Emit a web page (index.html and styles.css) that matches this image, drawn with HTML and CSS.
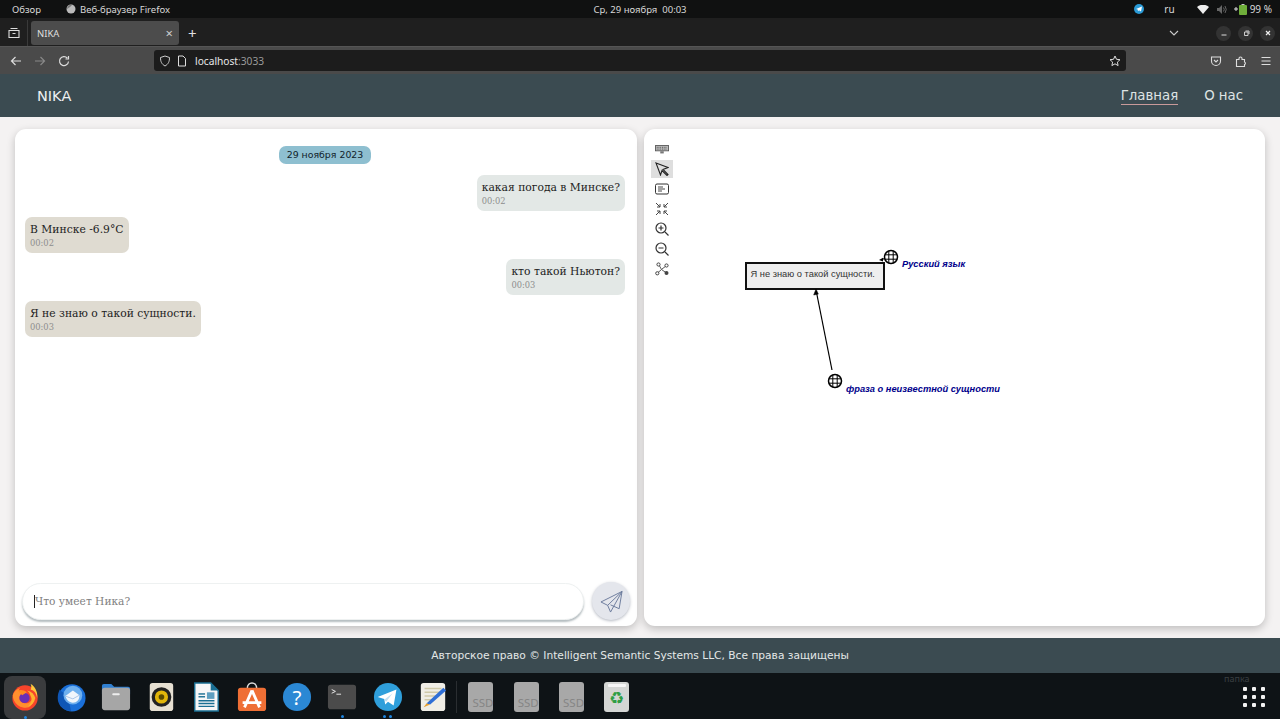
FILE: index.html
```html
<!DOCTYPE html>
<html lang="ru">
<head>
<meta charset="utf-8">
<title>NIKA</title>
<link rel="stylesheet" href="styles.css">
</head>
<body>
<div class="screen">
  <div class="topbar">
    <div class="topbar-left">
      <span>Обзор</span>
      <span class="app-name"><svg class="ff-mini" viewBox="0 0 10 10"><circle cx="5" cy="5" r="4.500" fill="#bbb"/><path d="M1 5a4 4 0 0 1 5-4L4 3z" fill="#777"/></svg>Веб-браузер Firefox</span>
    </div>
    <div class="clock">Ср, 29 ноября&nbsp; 00:03</div>
    <div class="topbar-right">
      <svg class="tray-tg" viewBox="0 0 10 10"><circle cx="5" cy="5" r="5" fill="#2a9ad6"/><path d="M2 5l6-2.400-1 5-2-1.400-1 1-.3-1.800z" fill="#fff"/></svg>
      <span class="lang">ru</span>
      <svg class="tray-wifi" viewBox="0 0 12 9"><path d="M0 2a9 9 0 0 1 12 0L6 9z" fill="#eee"/></svg>
      <svg class="tray-vol" viewBox="0 0 10 9"><path d="M0 3h2l3-3v9L2 6H0z" fill="#666"/><path d="M6.500 2.500q1.500 2 0 4M8 1q2.500 3.500 0 7" fill="none" stroke="#666"/></svg>
      <span class="battery"><svg class="tray-plus" viewBox="0 0 4 4"><path d="M0 2h4M2 0v4" stroke="#ddd"/></svg><svg class="tray-bat" viewBox="0 0 8 11"><rect x="2.500" width="3" height="2" fill="#ccc"/><rect y="1" width="8" height="10" rx="1" fill="#6fae3a"/></svg>99 %</span>
    </div>
  </div>

  <div class="tabbar">
    <div class="tab-list-btn"><svg viewBox="0 0 12 12" class="ic12"><path d="M2.500 1.500h7M1 3.500h10v7H1z M4.500 6.500h3" fill="none" stroke="#ddd" stroke-width="1.100"/></svg></div>
    <div class="tab"><span>NIKA</span><span class="tab-close">×</span></div>
    <span class="new-tab">+</span>
    <span class="spacer"></span>
    <svg class="chev" viewBox="0 0 10 6"><path d="M1 1l4 4 4-4" fill="none" stroke="#ccc" stroke-width="1.100"/></svg>
    <div class="win-btns">
      <span class="win-btn"><svg viewBox="0 0 8 8" class="ic8"><path d="M1.500 6h5" stroke="#ddd"/></svg></span>
      <span class="win-btn"><svg viewBox="0 0 8 8" class="ic8"><path d="M2.500 3h3.500v3.500H2.500zM3.500 2h3.500v3" fill="none" stroke="#ddd" stroke-width=".9"/></svg></span>
      <span class="win-btn"><svg viewBox="0 0 8 8" class="ic8"><path d="M2 2l4 4M6 2L2 6" stroke="#eee" stroke-width="1.200"/></svg></span>
    </div>
  </div>

  <div class="toolbar">
    <div class="nav-btns">
      <svg viewBox="0 0 12 12" class="ic12"><path d="M11 6H1.500M5.500 2l-4 4 4 4" fill="none" stroke="#ddd" stroke-width="1.200"/></svg>
      <svg viewBox="0 0 12 12" class="ic12"><path d="M1 6h9.500M6.500 2l4 4-4 4" fill="none" stroke="#888" stroke-width="1.200"/></svg>
      <svg viewBox="0 0 12 12" class="ic12"><path d="M10.500 6.500a4.500 4.500 0 1 1-1.200-3.500M10.500 1v3h-3" fill="none" stroke="#ddd" stroke-width="1.200"/></svg>
    </div>
    <div class="urlbar">
      <svg viewBox="0 0 12 12" class="ic12"><path d="M6 1l4.500 1.500c0 4-1 6.500-4.500 8.500-3.500-2-4.500-4.500-4.500-8.500z" fill="none" stroke="#ccc"/></svg>
      <svg viewBox="0 0 10 12" class="ic-page"><path d="M1.500 1h4.500l2.500 2.500V11h-7z" fill="none" stroke="#ddd"/></svg>
      <span class="url">localhost<span class="url-port">:3033</span></span>
      <span class="spacer"></span>
      <svg viewBox="0 0 12 12" class="ic12"><path d="M6 1l1.500 3.300 3.500.4-2.600 2.400.7 3.500L6 8.800l-3.100 1.800.7-3.500L1 4.700l3.500-.4z" fill="none" stroke="#ddd"/></svg>
    </div>
    <div class="tool-btns">
      <svg viewBox="0 0 12 12" class="ic12"><path d="M1.500 2h9v4a4.500 4.500 0 0 1-9 0zM4 5l2 2 2-2" fill="none" stroke="#ddd" stroke-width="1.100"/></svg>
      <svg viewBox="0 0 12 12" class="ic12"><path d="M1.500 4.500h2.500v-1a1.500 1.500 0 0 1 3 0v1h2.500V7a1.300 1.300 0 0 1 0 2.500v2h-8z" fill="none" stroke="#ddd" stroke-width="1.100"/></svg>
      <svg viewBox="0 0 12 12" class="ic12"><path d="M1.500 2.500h9M1.500 6h9M1.500 9.500h9" stroke="#ddd" stroke-width="1.100"/></svg>
    </div>
  </div>

  <header class="site-header">
    <span class="brand">NIKA</span>
    <nav class="site-nav">
      <a class="nav-link active">Главная</a>
      <a class="nav-link">О нас</a>
    </nav>
  </header>

  <main class="content">
    <section class="card chat">
      <div class="messages">
        <div class="date-pill">29 ноября 2023</div>
        <div class="msg msg-user">какая погода в Минске?<time>00:02</time></div>
        <div class="msg msg-bot">В Минске -6.9°C<time>00:02</time></div>
        <div class="msg msg-user">кто такой Ньютон?<time>00:03</time></div>
        <div class="msg msg-bot">Я не знаю о такой сущности.<time>00:03</time></div>
      </div>
      <div class="composer">
        <div class="input"><span class="caret"></span>Что умеет Ника?</div>
        <button class="send" type="button">
          <svg viewBox="0 0 24 24" class="send-ic"><path d="M23 1.500L1 12.500l7 3.500 3 7zM23 1.500L8 16M23 1.500l-3 18-9-4" fill="none" stroke="#6b7a9c" stroke-width="1" stroke-linejoin="round"/></svg>
        </button>
      </div>
    </section>

    <section class="card graph">
      <div class="graph-tools">
        <span class="gt"><svg viewBox="0 0 16 10" class="gt-kb"><rect x=".5" y=".5" width="15" height="6" fill="#bbb" stroke="#555"/><path d="M2 2.500h12M2 4.500h12" stroke="#444" stroke-dasharray="1 1"/><path d="M6 7h4v2.500H6z" fill="#777"/></svg></span>
        <span class="gt gt-active"><svg viewBox="0 0 14 14" class="gt-ic"><path d="M1 1l12 4.500-5 2L13 12.500 12 13.500 7 8.500l-1.500 4.500z" fill="none" stroke="#222" stroke-width="1.100"/></svg></span>
        <span class="gt"><svg viewBox="0 0 14 14" class="gt-ic"><rect x=".5" y="2" width="13" height="10" rx="1.500" fill="none" stroke="#333"/><path d="M3 5h5M3 7h7M3 9h4" stroke="#333" stroke-width=".9"/></svg></span>
        <span class="gt"><svg viewBox="0 0 14 14" class="gt-ic"><path d="M1 1l4 4M5 2v3H2M13 1L9 5M9 2v3h3M1 13l4-4M5 12V9H2M13 13L9 9M9 12V9h3" fill="none" stroke="#444"/></svg></span>
        <span class="gt"><svg viewBox="0 0 14 14" class="gt-ic"><circle cx="6" cy="6" r="5" fill="none" stroke="#333" stroke-width="1.200"/><path d="M10 10l3.500 3.500M3.500 6h5M6 3.500v5" stroke="#333" stroke-width="1.200"/></svg></span>
        <span class="gt"><svg viewBox="0 0 14 14" class="gt-ic"><circle cx="6" cy="6" r="5" fill="none" stroke="#333" stroke-width="1.200"/><path d="M10 10l3.500 3.500M3.500 6h5" stroke="#333" stroke-width="1.200"/></svg></span>
        <span class="gt"><svg viewBox="0 0 14 14" class="gt-ic"><path d="M4 3l2.500 4.500M2.500 11L6.500 7.500l5 3.500M7 7l4-3" fill="none" stroke="#444" stroke-width=".9"/><circle cx="3.500" cy="2.500" r="1.600" fill="#fff" stroke="#444"/><circle cx="2.300" cy="11.300" r="1.600" fill="#fff" stroke="#444"/><circle cx="11.500" cy="3.500" r="1.600" fill="#fff" stroke="#444"/><circle cx="11.500" cy="11" r="2" fill="#444"/></svg></span>
      </div>
      <svg class="scene" viewBox="0 0 622 498">
        <defs>
          <g id="globe">
            <circle r="6.500" fill="#fff" stroke="#000" stroke-width="1.500"/>
            <path d="M-6-2.200h12M-6 2.200h12M-2.200-6v12M2.200-6v12" stroke="#000" stroke-width="1"/>
          </g>
        </defs>
        <rect x="102" y="134" width="138" height="26" fill="#eee" stroke="#111" stroke-width="2"/>
        <text x="106.500" y="148" class="node-text">Я не знаю о такой сущности.</text>
        <path d="M188 241L172.800 165" stroke="#000" stroke-width="1.200"/>
        <path d="M172 160l-2.300 6 4.600-.9z" fill="#000" stroke="#000" stroke-width=".5"/>
        <path d="M235 131l4-2.200v3.800z" fill="#000"/>
        <path d="M238 130.500l5-2" stroke="#000" stroke-width="1.200"/>
        <use href="#globe" x="247" y="128"/>
        <use href="#globe" x="191" y="252"/>
        <text x="258" y="138" class="node-label">Русский язык</text>
        <text x="202" y="263" class="node-label">фраза о неизвестной сущности</text>
      </svg>
    </section>
  </main>

  <footer class="site-footer">Авторское право © Intelligent Semantic Systems LLC, Все права защищены</footer>

  <div class="dock">
    <div class="dock-group">
      <span class="dock-item dock-active">
        <svg viewBox="0 0 32 32" class="dock-ic"><circle cx="16" cy="17" r="13.500" fill="#f6442b"/><path d="M3 14a13 13 0 0 1 8-8c-2 2-2 3-1 4 3-1 7 0 8 3-3-1-8 0-8 4s5 7 10 5c4-2 5-6 3-11 4 4 3 13-3 16A13.500 13.500 0 0 1 3 14z" fill="#ff8f2e"/><path d="M22 2c4 2 8 8 7 15-1-5-3-8-7-9 1-2 1-4 0-6z" fill="#ffc83d"/><path d="M18 9c5 1 8 4 9 8-1 5-4 8-8 9 4-3 5-7 3-11-1-3-2-5-4-6z" fill="#ffb22e"/><circle cx="15.500" cy="17" r="5.500" fill="#6a2fb5"/><path d="M8 9c3-1 7-1 10 2l-5 3z" fill="#ff8a1f"/></svg>
        <i class="dot dot-ff"></i>
      </span>
      <span class="dock-item">
        <svg viewBox="0 0 32 32" class="dock-ic"><circle cx="17" cy="17" r="14.500" fill="#1a6fd8"/><path d="M4 8c-3 6-3 13 1 18 3 3 7 5 11 5L12 12C9 12 6 11 4 8z" fill="#0f56b5"/><path d="M11 4l3 7-5 3c-1-4 0-7 2-10z" fill="#1a6fd8"/><circle cx="18" cy="14" r="10" fill="#6fb0ee"/><path d="M10 15l8-6 7 5c0 5-3 8-7 8s-7-3-8-7z" fill="#f2f6fb"/><path d="M10 15l8 3 7-4" fill="none" stroke="#a9c4e6"/></svg>
      </span>
      <span class="dock-item">
        <svg viewBox="0 0 32 32" class="dock-ic"><path d="M1 4a2 2 0 0 1 2-2h8l3 3h15a2 2 0 0 1 2 2v6H1z" fill="#2f7fd1"/><rect x="1" y="6" width="30" height="24" rx="3" fill="#a6a6a6"/><rect x="12" y="12" width="8" height="2" rx="1" fill="#eee"/></svg>
      </span>
      <span class="dock-item">
        <svg viewBox="0 0 32 32" class="dock-ic"><rect x="4" y="1" width="25" height="30" rx="3" fill="#e6e0d2"/><circle cx="16.500" cy="16" r="10.500" fill="#222"/><circle cx="16.500" cy="16" r="7" fill="#e2b60a"/><circle cx="16.500" cy="16" r="3" fill="#5a4a00"/></svg>
      </span>
      <span class="dock-item">
        <svg viewBox="0 0 32 32" class="dock-ic"><path d="M4 1h17l8 8v22H4z" fill="#f7f7f7" stroke="#1a6f93" stroke-width="1.500"/><path d="M21 1l8 8h-8z" fill="#1a6f93"/><rect x="8" y="12" width="7" height="1.500" fill="#1a6f93"/><rect x="8" y="15" width="7" height="1.500" fill="#1a6f93"/><rect x="17" y="11" width="8" height="7" fill="#5e9fc0"/><path d="M8 20h17M8 23h17M8 26h17" stroke="#1a6f93" stroke-width="1.500"/></svg>
      </span>
      <span class="dock-item">
        <svg viewBox="0 0 32 32" class="dock-ic"><path d="M11 7c0-8 10-8 10 0" fill="none" stroke="#ddd" stroke-width="1.500"/><rect x="1" y="6" width="30" height="25" rx="3" fill="#ef6f35"/><path d="M16 9l-8 18M16 9l8 18M6 22h20" stroke="#fff" stroke-width="3" fill="none"/></svg>
      </span>
      <span class="dock-item">
        <svg viewBox="0 0 32 32" class="dock-ic"><circle cx="16" cy="16" r="15" fill="#2b88d4"/><text x="16" y="24" class="help-q">?</text></svg>
      </span>
      <span class="dock-item">
        <svg viewBox="0 0 32 32" class="dock-ic"><rect x="1" y="3" width="30" height="26" rx="3" fill="#4b4b4b"/><path d="M5 8l4 2-4 2" fill="none" stroke="#eee"/><path d="M10 13h5" stroke="#eee"/></svg>
        <i class="dot dot-one"></i>
      </span>
      <span class="dock-item">
        <svg viewBox="0 0 32 32" class="dock-ic"><circle cx="16" cy="16" r="15" fill="#2f9fdb"/><path d="M5 16l20-8-3 17-6-4-3 3-1-6z" fill="#fff"/><path d="M12 19l9-7-7 9z" fill="#c3dff0"/></svg>
        <i class="dot dot-two-a"></i><i class="dot dot-two-b"></i>
      </span>
      <span class="dock-item">
        <svg viewBox="0 0 32 32" class="dock-ic"><rect x="3" y="1" width="26" height="30" rx="3" fill="#f0eee6"/><path d="M7 7h18M7 11h18M7 15h14M7 19h10" stroke="#cfc9a8" stroke-width="1.500"/><path d="M27 6l3 3L13 24l-4-1z" fill="#2f6fd6"/><path d="M9 23l4 1-7 3z" fill="#e6a030"/></svg>
      </span>
    </div>
    <span class="dock-sep"></span>
    <div class="dock-group">
      <span class="dock-item"><span class="ssd">SSD</span></span>
      <span class="dock-item"><span class="ssd">SSD</span></span>
      <span class="dock-item"><span class="ssd">SSD</span></span>
      <span class="dock-item"><span class="bin"><span class="bin-lid"></span><span class="bin-mark">♻</span></span></span>
    </div>
    <span class="folder-hint">папка</span>
    <span class="apps-grid"><i></i><i></i><i></i><i></i><i></i><i></i><i></i><i></i><i></i></span>
  </div>
</div>
</body>
</html>
```

FILE: styles.css
```css
* { box-sizing: border-box; }
html, body { margin: 0; padding: 0; height: 100%; overflow: hidden; }
body { font-family: "Noto Sans", sans-serif; background: #000; }
svg { display: block; flex: none; }

.screen { width: 1280px; height: 719px; display: flex; flex-direction: column; }
.spacer { flex: 1; }
.ic12 { width: 12px; height: 12px; }
.ic8 { width: 8px; height: 8px; }
.ic-page { width: 10px; height: 12px; }

/* system bar */
.topbar { height: 18px; background: #101111; color: #d8d8d8; font-size: 9.500px; display: grid; grid-template-columns: 1fr auto 1fr; align-items: center; padding: 0 8px 0 8px; }
.topbar-left { display: flex; align-items: center; gap: 25px; padding-left: 4px; }
.app-name { display: flex; align-items: center; gap: 4px; }
.ff-mini { width: 10px; height: 10px; }
.topbar-right { display: flex; align-items: center; justify-content: flex-end; }
.tray-tg { width: 10px; height: 10px; margin-right: 20px; }
.lang { margin-right: 22px; font-size: 10px; }
.tray-wifi { width: 12px; height: 9px; margin-right: 8px; }
.tray-vol { width: 10px; height: 9px; margin-right: 7px; }
.battery { display: flex; align-items: center; gap: 1px; font-size: 10px; }
.tray-plus { width: 4px; height: 4px; }
.tray-bat { width: 8px; height: 11px; margin-right: 2px; }

/* tab bar */
.tabbar { height: 28px; padding-top: 2px; background: #1f1f1f; display: flex; align-items: center; color: #ddd; }
.tab-list-btn { width: 28px; height: 26px; display: flex; align-items: center; justify-content: center; border-right: 1px solid #3a3a3a; }
.tab { width: 148px; height: 24px; margin-left: 3px; background: #4c4c4c; border-radius: 3px; display: flex; align-items: center; justify-content: space-between; padding: 0 6px; font-size: 9.500px; }
.tab-close { font-size: 13px; line-height: 1; color: #ccc; }
.new-tab { margin-left: 9px; font-size: 15px; line-height: 1; color: #e0e0e0; }
.chev { width: 10px; height: 6px; margin-right: 37px; }
.win-btns { display: flex; gap: 7px; margin-right: 5px; }
.win-btn { width: 15px; height: 15px; border-radius: 50%; background: #333; display: flex; align-items: center; justify-content: center; }

/* browser toolbar */
.toolbar { height: 28px; background: #4a4a4a; display: flex; align-items: center; border-top: 1px solid #555; }
.nav-btns { display: flex; gap: 12px; padding-left: 10px; width: 154px; }
.urlbar { width: 972px; height: 21px; background: #1c1c1c; border-radius: 3px; display: flex; align-items: center; gap: 6px; padding: 0 5px 0 5px; color: #e8e8e8; font-size: 10.200px; }
.urlbar .url { margin-left: 2px; }
.url-port { color: #9a9a9a; }
.tool-btns { display: flex; gap: 13px; margin-left: 84px; }

/* site header */
.site-header { height: 43px; padding: 1px 37px 0; background: #3b4b51; color: #eef1f1; display: flex; align-items: center; justify-content: space-between; font-family: "DejaVu Sans", sans-serif; }
.brand { font-size: 14.500px; }
.site-nav { display: flex; gap: 26px; }
.nav-link { font-size: 13.300px; color: #dfe4e4; padding-bottom: 1px; border-bottom: 1px solid transparent; }
.nav-link.active { border-bottom-color: #c99a9a; }

/* content */
.content { flex: 1; min-height: 0; background: #f4f2f2; display: grid; grid-template-columns: 622px 621px; gap: 7px; padding: 12px 15px; }
.card { background: #fff; border-radius: 11px; box-shadow: 0 3px 8px rgba(0, 0, 0, .22); }
.chat { display: flex; flex-direction: column; padding: 17px 7px 6px 7px; }
.messages { flex: 1; display: flex; flex-direction: column; gap: 6px; padding: 0 5px 0 3px; font-family: "DejaVu Serif", serif; }
.date-pill { align-self: center; height: 18px; line-height: 18px; padding: 0 8px; margin-bottom: 5px; border-radius: 7px; background: #8ebfd0; color: #10222a; font-family: "DejaVu Sans", sans-serif; font-size: 9.400px; }
.msg { padding: 5px 5px 4px 5px; height: 36px; border-radius: 7px; font-size: 10.750px; line-height: 15px; color: #222; }
.msg time { display: block; font-size: 8.300px; line-height: 13px; color: #8d8d8d; }
.msg-user { align-self: flex-end; background: #e3e8e6; }
.msg-bot { align-self: flex-start; background: #dfdbd1; }

.composer { display: flex; align-items: center; gap: 8px; }
.input { flex: 1; height: 37px; background: #fff; border-radius: 19px; border: 1px solid #eef1f1; box-shadow: 0 2px 2px rgba(120, 135, 140, .55); display: flex; align-items: center; padding-left: 11px; font-family: "DejaVu Serif Condensed", "DejaVu Serif", serif; font-size: 11.800px; color: #808080; }
.caret { width: 1px; height: 13px; background: #222; }
.send { width: 38px; height: 38px; border: 0; padding: 0; border-radius: 50%; background: #e4e6ec; box-shadow: 0 1px 3px rgba(90, 100, 120, .45); display: flex; align-items: center; justify-content: center; }
.send-ic { width: 23px; height: 23px; }

/* graph */
.graph { position: relative; padding: 11px 0 0 7px; }
.graph-tools { display: flex; flex-direction: column; gap: 2px; width: 22px; position: relative; z-index: 1; }
.gt { height: 18px; display: flex; align-items: center; justify-content: center; }
.gt-active { background: #dedede; }
.gt-ic { width: 14px; height: 14px; }
.gt-kb { width: 14px; height: 9px; }
.scene { position: absolute; left: 0; top: 0; width: 622px; height: 498px; }
.node-text { font-family: "Liberation Sans", sans-serif; font-size: 9.300px; fill: #333; }
.node-label { font-family: "Liberation Sans", sans-serif; font-size: 9.300px; font-weight: bold; font-style: italic; fill: #00008b; }

/* footer */
.site-footer { height: 35px; padding-bottom: 1px; background: #3b4b51; color: #e4e8e8; display: flex; align-items: center; justify-content: center; font-family: "DejaVu Sans", sans-serif; font-size: 10.650px; }

/* dock */
.dock { height: 46px; padding: 2px 0 0 9.300px; background: #0e1316; display: flex; align-items: center; gap: 7.500px; position: relative; }
.dock-group { display: flex; gap: 13.300px; }
.dock-item { width: 32px; height: 32px; position: relative; flex: none; display: flex; align-items: center; justify-content: center; }
.dock-ic { width: 30px; height: 30px; }
.dock-active::before { content: ""; position: absolute; left: -5px; top: -5px; width: 42px; height: 43px; border-radius: 8px; background: #3a3c3e; }
.dock-active .dock-ic { position: relative; }
.dot { position: absolute; top: 34px; width: 3px; height: 3px; border-radius: 50%; background: #1f86e0; }
.dot-ff { left: 14.500px; top: 35px; }
.dot-one { left: 14.500px; }
.dot-two-a { left: 11.500px; }
.dot-two-b { left: 17.500px; }
.help-q { font-family: "Noto Sans", sans-serif; font-size: 22px; fill: #fff; text-anchor: middle; }
.dock-sep { width: 1px; height: 32px; background: #2a2e31; flex: none; }
.ssd { width: 25px; height: 30px; padding-bottom: 3px; border-radius: 3px; background: #a8a8a8; color: #858585; font-size: 11.500px; line-height: 13px; display: flex; align-items: flex-end; justify-content: flex-end; font-family: "Noto Sans", sans-serif; }
.bin { width: 25px; height: 30px; border-radius: 3px; background: #d4d6d4; display: flex; flex-direction: column; align-items: center; padding-top: 2px; }
.bin-lid { width: 18px; height: 3px; border-radius: 1px; background: #f6f6f6; }
.bin-mark { color: #2f9e44; font-family: "DejaVu Sans", sans-serif; font-size: 17px; line-height: 22px; }
.folder-hint { position: absolute; left: 1224px; top: -1px; font-size: 9px; color: #3a3f42; }
.apps-grid { margin-left: auto; margin-right: 15px; width: 22px; display: grid; grid-template-columns: repeat(3, 4px); gap: 4px; justify-content: space-between; }
.apps-grid i { width: 4px; height: 4px; background: #f2f2f2; border-radius: 1px; }
```
